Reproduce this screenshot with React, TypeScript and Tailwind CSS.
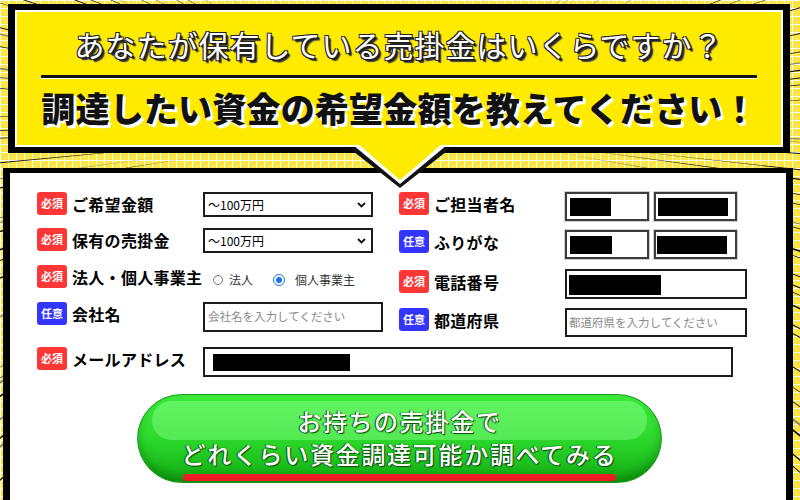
import React from 'react';

const jp = "font-['Noto_Sans_CJK_JP','Noto_Sans',sans-serif]";

// manga style speed lines behind everything
const rays = Array.from({ length: 300 }, (_, i) => {
  const s1 = Math.sin(i * 12.9898) * 43758.5453;
  const r1 = s1 - Math.floor(s1);
  const s2 = Math.sin(i * 78.233 + 3.1) * 24634.6345;
  const r2 = s2 - Math.floor(s2);
  const a = (i / 300) * Math.PI * 2 + r1 * 0.015;
  const cx = 400;
  const cy = 125;
  const inner = 50 + r2 * 200;
  const outer = 1100;
  const w = 0.6 + r1 * 2.6;
  const dx = Math.cos(a);
  const dy = Math.sin(a);
  const px = -dy;
  const py = dx;
  const tip = `${cx + dx * inner},${cy + dy * inner}`;
  const o1 = `${cx + dx * outer + px * w},${cy + dy * outer + py * w}`;
  const o2 = `${cx + dx * outer - px * w},${cy + dy * outer - py * w}`;
  return { points: `${tip} ${o1} ${o2}`, show: r2 > 0.45, gray: r1 > 0.82 };
});

const Badge = ({ optional }: { optional?: boolean }) => (
  <span
    className={`flex h-[23px] w-[30px] shrink-0 items-center justify-center rounded-[3px] text-[11px] font-bold leading-none text-white ${
      optional ? 'bg-[#3434ff]' : 'bg-[#ff3636]'
    }`}
  >
    {optional ? '任意' : '必須'}
  </span>
);

const Label = ({ optional, children }: { optional?: boolean; children: React.ReactNode }) => (
  <div className="flex w-[166px] shrink-0 items-center gap-[5px]">
    <Badge optional={optional} />
    <span className="whitespace-nowrap text-[16px] font-bold leading-none tracking-[0.3px] text-black">{children}</span>
  </div>
);

const Select = () => (
  <div className="flex h-[25px] w-[170px] items-center justify-between border-2 border-[#1c1c1c] bg-white pl-[3px] pr-[5px]">
    <span className="text-[12px] leading-none text-black">～100万円</span>
    <svg width="9" height="6" viewBox="0 0 9 6">
      <polyline points="1,1 4.5,4.5 8,1" fill="none" stroke="#111" strokeWidth="1.8" />
    </svg>
  </div>
);

const Redacted = ({ w, h = 18 }: { w: number; h?: number }) => (
  <div className="bg-black" style={{ width: w, height: h }} />
);

const NameBox = ({ w, bar, pl }: { w: string; bar: number; pl: string }) => (
  <div
    className={`flex h-[29px] items-center border-2 border-[#3c3c3c] bg-white shadow-[0_0_0_1px_#d0d0d0] ${w} ${pl}`}
  >
    <Redacted w={bar} />
  </div>
);

const App = () => {
  return (
    <div
      className={`relative h-[500px] w-[800px] overflow-hidden bg-[#fbe64a] bg-[linear-gradient(to_right,rgba(255,255,255,0.85)_1.5px,transparent_1.5px),linear-gradient(to_bottom,rgba(255,255,255,0.85)_1.5px,transparent_1.5px)] bg-[size:8px_8px] ${jp}`}
    >
      <svg className="absolute left-0 top-0 h-[500px] w-[800px]" viewBox="0 0 800 500">
        {rays
          .filter((r) => r.show)
          .map((r, i) => (
            <polygon key={i} points={r.points} fill={r.gray ? '#8a8a6a' : '#111'} />
          ))}
      </svg>

      <div className="relative">
        {/* header balloon */}
        <div className="ml-[8px] mt-[4px] flex h-[149px] w-[782px] flex-col items-center border-x-[7px] border-y-[6px] border-black bg-[#ffeb00] pt-[19px] shadow-[inset_0_0_0_2px_#fff]">
          <div className="text-[30px] font-normal leading-[30px] tracking-[1px] text-white [text-shadow:-1px_-1px_0_#222,1px_-1px_0_#222,-1px_1px_0_#222,1px_1px_0_#222,2px_2px_0_#222,3px_3px_1px_#444]">
            あなたが保有している売掛金はいくらですか？
          </div>
          <div className="mt-[16px] h-[3px] w-[716px] bg-[#111] shadow-[0_1px_0_#fff]" />
          <div className="mt-[13px] text-[34px] font-black leading-[34px] tracking-[0.2px] text-[#111] [text-shadow:2px_2px_0_#fff,3px_3px_0_#fff]">
            調達したい資金の希望金額を教えてください！
          </div>
        </div>

        {/* form */}
        <div className="ml-[3px] mt-[15px] h-[340px] w-[790px] border-x-[7px] border-t-[5px] border-black bg-white pl-[27px] pt-[19px]">
          <div className="flex">
            <div className="flex w-[362px] flex-col">
              <div className="flex h-[36px] items-start">
                <Label>ご希望金額</Label>
                <Select />
              </div>
              <div className="flex h-[37px] items-start">
                <Label>保有の売掛金</Label>
                <Select />
              </div>
              <div className="flex h-[37px] items-start">
                <Label>法人・個人事業主</Label>
                <div className="flex h-[23px] items-center pt-[7px] text-[12px] leading-none text-[#333]">
                  <span className="ml-[10px] h-[10px] w-[10px] rounded-full border border-[#767676] bg-white" />
                  <span className="ml-[6px]">法人</span>
                  <span className="ml-[20px] flex h-[12px] w-[12px] items-center justify-center rounded-full border-[1.5px] border-[#1a73e8] bg-white">
                    <span className="h-[6px] w-[6px] rounded-full bg-[#1a73e8]" />
                  </span>
                  <span className="ml-[10px]">個人事業主</span>
                </div>
              </div>
              <div className="flex h-[45px] items-start">
                <Label optional>会社名</Label>
                <div className="flex h-[30px] w-[180px] items-center border-2 border-[#1c1c1c] bg-white pl-[3px]">
                  <span className="text-[11.5px] leading-none text-[#8a8a8a]">会社名を入力してください</span>
                </div>
              </div>
            </div>

            <div className="flex flex-col">
              <div className="flex h-[38px] items-start">
                <Label>ご担当者名</Label>
                <div className="flex gap-[5px]">
                  <NameBox w="w-[84px]" bar={41} pl="pl-[3px]" />
                  <NameBox w="w-[83px]" bar={70} pl="pl-[2px]" />
                </div>
              </div>
              <div className="flex h-[39px] items-start">
                <Label optional>ふりがな</Label>
                <div className="flex gap-[5px]">
                  <NameBox w="w-[84px]" bar={42} pl="pl-[3px]" />
                  <NameBox w="w-[83px]" bar={70} pl="pl-[1px]" />
                </div>
              </div>
              <div className="flex h-[39px] items-start">
                <div className="pt-[1px]">
                  <Label>電話番号</Label>
                </div>
                <div className="flex h-[30px] w-[182px] items-center border-2 border-[#1c1c1c] bg-white pl-[2px] pt-[2px]">
                  <Redacted w={92} h={20} />
                </div>
              </div>
              <div className="flex items-start">
                <Label optional>都道府県</Label>
                <div className="flex h-[29px] w-[182px] items-center border-2 border-[#1c1c1c] bg-white pl-[2px]">
                  <span className="text-[11.5px] leading-none text-[#8a8a8a]">都道府県を入力してください</span>
                </div>
              </div>
            </div>
          </div>

          <div className="flex items-start">
            <Label>メールアドレス</Label>
            <div className="flex h-[30px] w-[530px] items-center border-2 border-[#1c1c1c] bg-white pl-[8px]">
              <Redacted w={137} h={17} />
            </div>
          </div>

          {/* submit button */}
          <div className="ml-[100px] mt-[17px]">
            <button className="relative flex h-[89px] w-[525px] flex-col items-center justify-center overflow-hidden rounded-full border border-[#1a9a1a] bg-[linear-gradient(to_bottom,#3bea3b_0%,#2fdc2f_45%,#1fc41f_75%,#12a812_100%)] pb-[4px] shadow-[inset_0_-6px_10px_rgba(0,80,0,0.35)]">
              <span className="absolute left-[14px] right-[14px] top-[6px] h-[39px] rounded-full bg-[linear-gradient(to_bottom,#66f566,#58ec58)] opacity-90" />
              <span className="relative text-[24px] font-medium leading-[33px] tracking-[1.5px] text-white [text-shadow:0_0_1px_#0b4d0b,1px_1px_1px_#0b4d0b,-1px_0_1px_#0b4d0b]">
                お持ちの売掛金で
              </span>
              <span className="relative text-[24px] font-medium leading-[33px] tracking-[1.7px] text-white [text-shadow:0_0_1px_#0b4d0b,1px_1px_1px_#0b4d0b,-1px_0_1px_#0b4d0b]">
                どれくらい資金調達可能か調べてみる
              </span>
              <span className="absolute bottom-[1px] left-[45px] h-[7px] w-[433px] rounded-full bg-[#ee1c25]" />
            </button>
          </div>
        </div>
      </div>

      {/* balloon pointer */}
      <svg className="absolute left-[340px] top-[135px] h-[60px] w-[120px]" viewBox="340 135 120 60">
        <polygon points="349,148 451,148 400,188" fill="#111" />
        <polygon points="353,145 447,145 400,184" fill="#fff" />
        <polygon points="357,143 443,143 400,180" fill="#ffeb00" />
      </svg>
    </div>
  );
};

export default App;
